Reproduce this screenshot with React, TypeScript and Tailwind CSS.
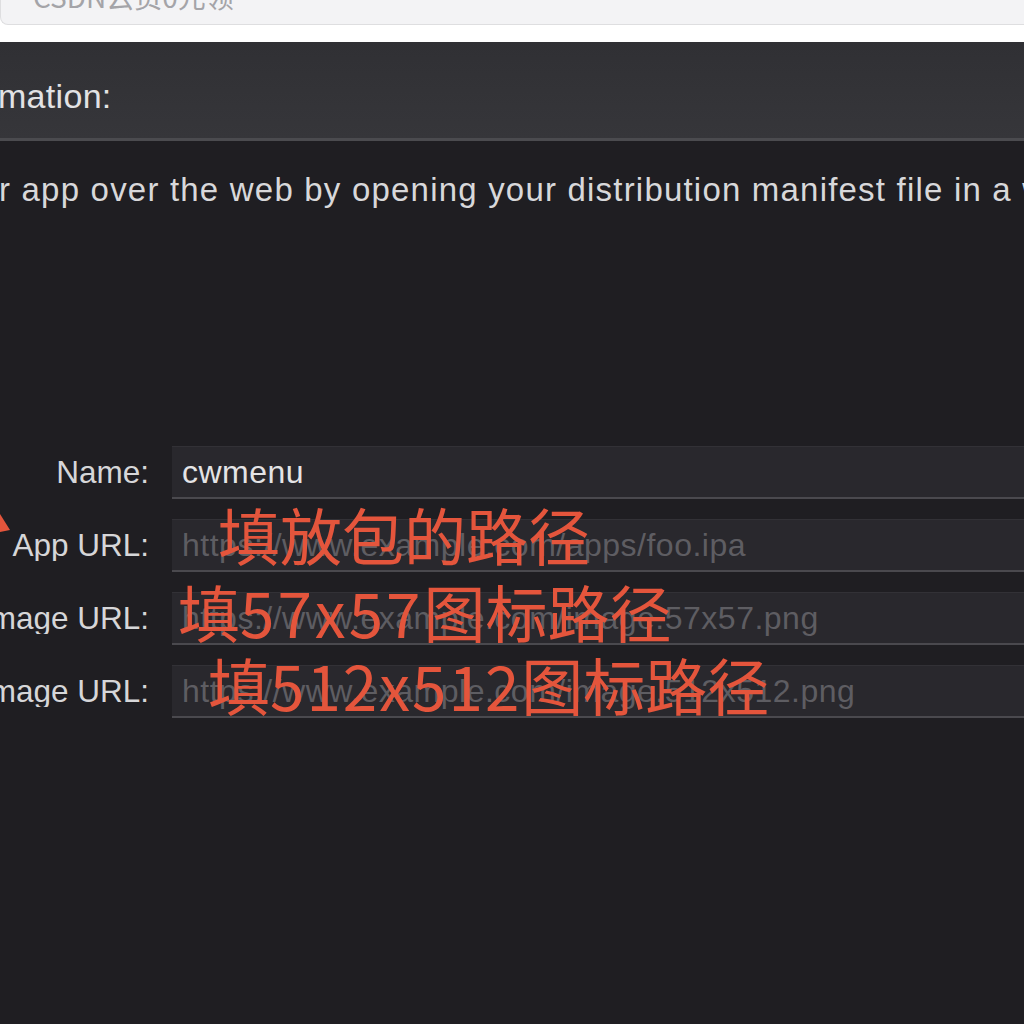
import { useState } from "react"

type Field = {
  label: string
  value?: string
  placeholder: string
}

const fields: Field[] = [
  { label: "Name:", value: "cwmenu", placeholder: "" },
  { label: "App URL:", placeholder: "https://www.example.com/apps/foo.ipa" },
  { label: "Display Image URL:", placeholder: "https://www.example.com/image.57x57.png" },
  { label: "Full Size Image URL:", placeholder: "https://www.example.com/image.512x512.png" },
]

const FormRow = ({ label, value, placeholder }: Field) => {
  const [text, setText] = useState(value ?? "")
  return (
    <div className="flex items-center h-[53px]">
      <div className="w-[150px] shrink-0 overflow-hidden flex justify-end pr-[1px]">
        <span className="whitespace-nowrap text-[31.5px] text-[#d6d6d8] leading-none">{label}</span>
      </div>
      <input
        value={text}
        onChange={(e) => setText(e.target.value)}
        placeholder={placeholder}
        className="ml-[22px] h-[53px] w-[900px] shrink-0 bg-[#29282d] border-t border-t-[#323136] border-b-2 border-b-[#4a494e] pl-[10px] text-[32px] tracking-[0.5px] text-[#e4e4e6] placeholder:text-[#5e5d62] outline-none"
      />
    </div>
  )
}

export default function App() {
  return (
    <div className="w-[1024px] h-[1024px] overflow-hidden bg-white font-['Liberation_Sans','Noto_Sans_CJK_SC',sans-serif]">
      <div className="h-[25px] bg-[#f3f3f5] border-b border-l border-[#dedee0] rounded-bl-lg overflow-hidden pl-[32px]">
        <p className="mt-[-18px] text-[28px] leading-[28px] text-[#a4a4a8] font-['Noto_Sans_CJK_SC',sans-serif]">CSDN云资0元领</p>
      </div>
      <div className="h-[17px]" />

      <div className="h-[982px] bg-[#1f1e22] flex flex-col">
        <div className="h-[99px] shrink-0 bg-gradient-to-b from-[#303034] to-[#36363a] border-b-[3px] border-b-[#4b4b4f] flex items-center pt-[12px] overflow-hidden">
          <h2 className="text-[34px] leading-none tracking-[0.3px] text-[#e2e2e4] whitespace-nowrap ml-[-2px]">mation:</h2>
        </div>

        <p className="mt-[32px] text-[33px] leading-none text-[#d8d8da] whitespace-nowrap tracking-[1.2px] ml-[-1px]">
          r app over the web by opening your distribution manifest file in a web browser.
        </p>

        <div className="relative mt-[240px] flex flex-col gap-[20px]">
          {fields.map((f) => (
            <FormRow key={f.label} {...f} />
          ))}

          <svg className="absolute left-0 top-[66px]" width="14" height="22" viewBox="0 0 14 22">
            <polygon points="0,2 10,18 0,20" fill="#e4553c" />
          </svg>

          <span className="absolute left-[218px] top-[57px] text-[62px] leading-none text-[#e4553c] font-['Noto_Sans_CJK_SC',sans-serif] whitespace-nowrap pointer-events-none">
            填放包的路径
          </span>
          <span className="absolute left-[178px] top-[134px] text-[62px] leading-none text-[#e4553c] font-['Noto_Sans_CJK_SC',sans-serif] whitespace-nowrap pointer-events-none">
            填<span className="tracking-[3px]">57x57</span>图标路径
          </span>
          <span className="absolute left-[208px] top-[207px] text-[62px] leading-none text-[#e4553c] font-['Noto_Sans_CJK_SC',sans-serif] whitespace-nowrap pointer-events-none">
            填<span className="tracking-[2px]">512x512</span>图标路径
          </span>
        </div>
      </div>
    </div>
  )
}
